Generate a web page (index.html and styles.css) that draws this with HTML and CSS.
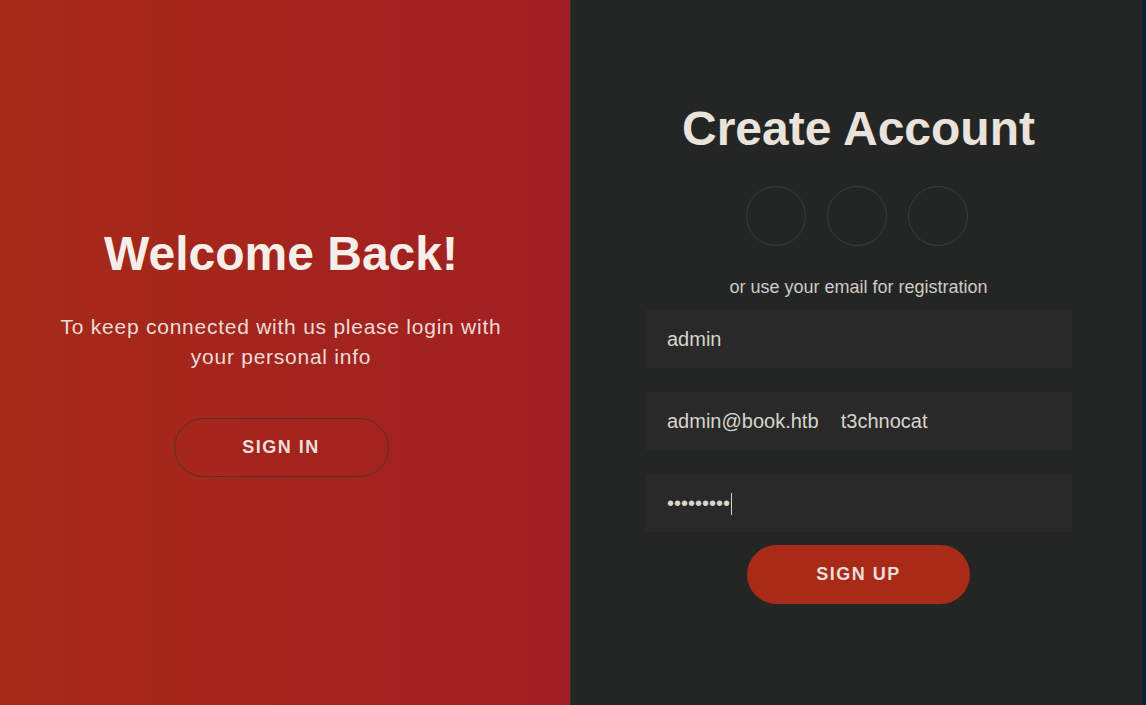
FILE: index.html
```html
<!DOCTYPE html>
<html lang="en">
<head>
<meta charset="utf-8">
<title>Create Account</title>
<link rel="stylesheet" href="styles.css">
</head>
<body>
<div class="page">
  <section class="overlay">
    <h1 class="title title-light">Welcome Back!</h1>
    <p class="lead">To keep connected with us please login with your personal info</p>
    <button class="btn btn-ghost" type="button">Sign In</button>
  </section>
  <section class="signup">
    <form class="form">
      <h1 class="title">Create Account</h1>
      <div class="social">
        <a class="social-link" href="#"></a>
        <a class="social-link" href="#"></a>
        <a class="social-link" href="#"></a>
      </div>
      <span class="hint">or use your email for registration</span>
      <input class="field" type="text" value="admin">
      <input class="field" type="text" value="admin@book.htb    t3chnocat">
      <div class="field-wrap">
        <input class="field" type="password" value="123456789">
        <span class="caret"></span>
      </div>
      <button class="btn btn-solid" type="button">Sign Up</button>
    </form>
  </section>
  <div class="edge"></div>
</div>
</body>
</html>
```

FILE: styles.css
```css
* { box-sizing: border-box; }

html, body {
  margin: 0;
  padding: 0;
  height: 100%;
}

body {
  font-family: "Liberation Sans", Arial, sans-serif;
  background: #242625;
  overflow: hidden;
}

.page {
  display: flex;
  width: 1146px;
  height: 705px;
}

.overlay {
  width: 570px;
  flex: none;
  display: flex;
  flex-direction: column;
  align-items: center;
  padding: 226px 48px 0 40px;
  background: linear-gradient(to right, #a62a18, #a11f23);
  text-align: center;
}

.title {
  margin: 0;
  font-size: 48px;
  font-weight: bold;
  line-height: 55px;
  color: #e9e3dc;
}

.title-light {
  color: #f6efe9;
}

.lead {
  margin: 31px 0 46px;
  font-size: 21px;
  line-height: 30px;
  letter-spacing: 0.75px;
  color: #ecdcd8;
}

.btn {
  display: flex;
  align-items: center;
  justify-content: center;
  height: 59px;
  border-radius: 30px;
  font-family: "Liberation Sans", Arial, sans-serif;
  font-size: 18px;
  font-weight: bold;
  letter-spacing: 1.5px;
  text-transform: uppercase;
  cursor: pointer;
}

.btn-ghost {
  width: 215px;
  background: transparent;
  border: 1px solid #55302a;
  color: #ecdfdc;
}

.btn-solid {
  width: 223px;
  margin-top: 13px;
  background: #a82a17;
  border: none;
  color: #eadfdb;
}

.signup {
  width: 572px;
  flex: none;
  border-left: 1px solid #3b2b2a;
  background: #242625;
}

.form {
  display: flex;
  flex-direction: column;
  align-items: center;
  padding: 101px 70px 0 74px;
  margin: 0;
}

.social {
  display: flex;
  gap: 21px;
  margin: 30px 0 31px;
  padding-right: 3px;
}

.social-link {
  display: block;
  width: 60px;
  height: 60px;
  border: 1px solid #3a3b3a;
  border-radius: 50%;
}

.hint {
  font-size: 18px;
  line-height: 21px;
  color: #cfcac4;
}

.field-wrap {
  position: relative;
  width: 427px;
}

.field {
  display: block;
  width: 427px;
  height: 58px;
  margin: 12px 0;
  padding: 0 22px;
  border: none;
  outline: none;
  background: #282928;
  font-family: "Liberation Sans", Arial, sans-serif;
  font-size: 20px;
  color: #d8d4ce;
}

.field-wrap .field {
  margin-bottom: 0;
}

.caret {
  position: absolute;
  left: 86px;
  top: 31px;
  width: 1px;
  height: 22px;
  background: #d8d4ce;
}

.edge {
  width: 4px;
  flex: none;
  background: #0e2037;
}
```
